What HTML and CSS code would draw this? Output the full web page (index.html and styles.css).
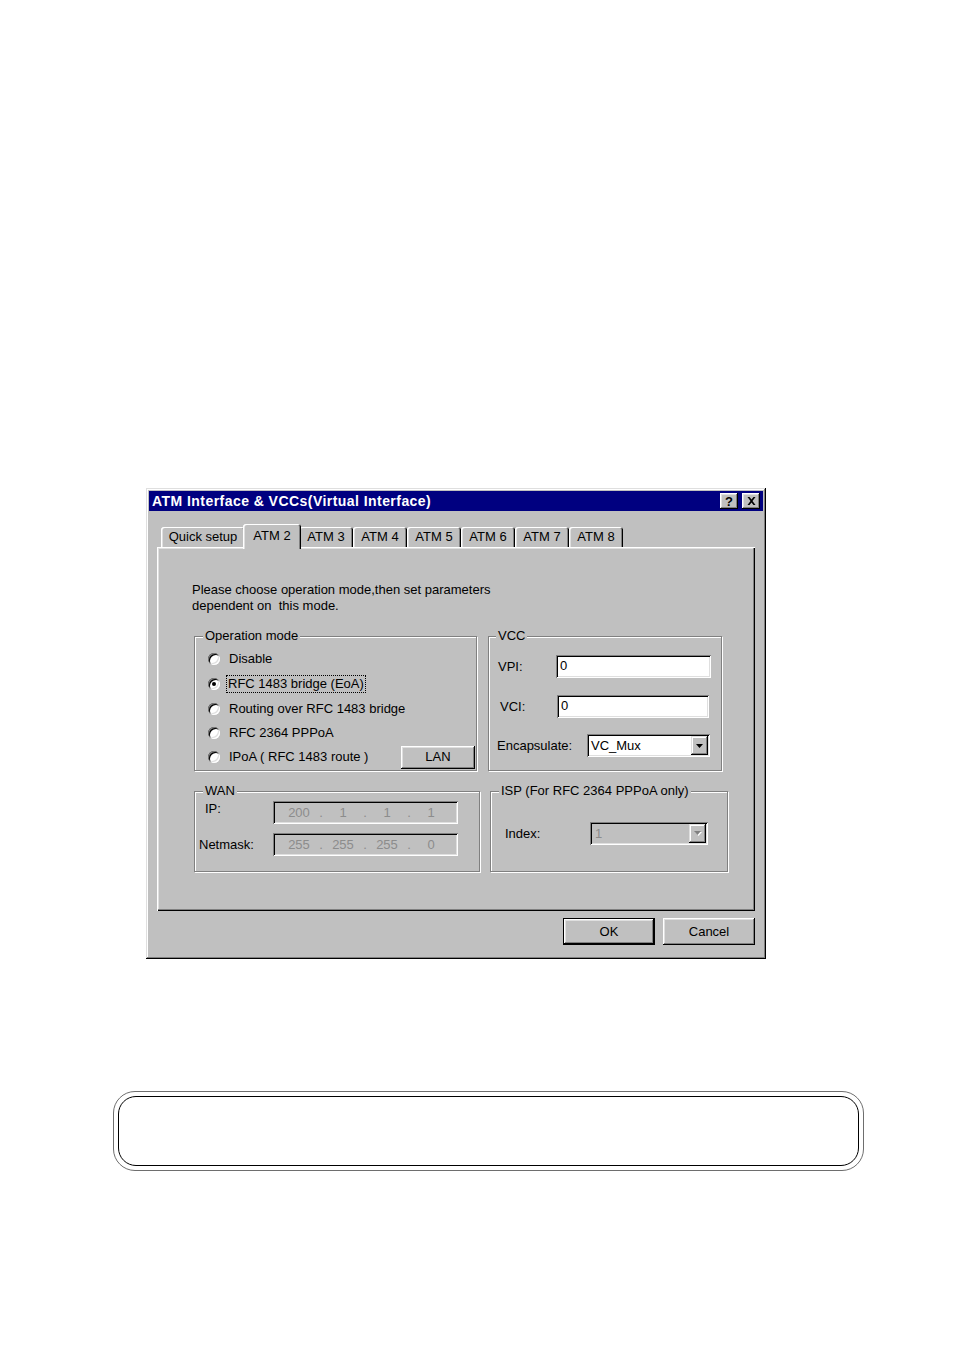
FILE: index.html
```html
<!DOCTYPE html>
<html>
<head>
<meta charset="utf-8">
<title>ATM Interface &amp; VCCs</title>
<link rel="stylesheet" href="styles.css">
</head>
<body>
<div class="page">
  <div class="window">
    <div class="titlebar">
      <span class="title">ATM Interface &amp; VCCs(Virtual Interface)</span>
      <div class="tbtns">
        <span class="tbtn help">?</span>
        <span class="tbtn close"><svg width="9" height="8" viewBox="0 0 9 8"><path d="M0.5 0h2l2 2.6 2-2.6h2l-3 4 3 4h-2l-2-2.6-2 2.6h-2l3-4z" fill="#000"/></svg></span>
      </div>
    </div>

    <div class="tabs">
      <div class="tab wide">Quick setup</div>
      <div class="tab active">ATM 2</div>
      <div class="tab">ATM 3</div>
      <div class="tab">ATM 4</div>
      <div class="tab">ATM 5</div>
      <div class="tab">ATM 6</div>
      <div class="tab">ATM 7</div>
      <div class="tab">ATM 8</div>
    </div>

    <div class="panel">
      <p class="intro">Please choose operation mode,then set parameters<br>dependent on&nbsp; this mode.</p>

      <div class="row row1">
        <fieldset class="group opmode">
          <legend>Operation mode</legend>
          <div class="radios">
            <div class="ropt r25"><span class="radio"></span><span class="rlabel">Disable</span></div>
            <div class="ropt r25"><span class="radio on"></span><span class="rlabel focus">RFC 1483 bridge (EoA)</span></div>
            <div class="ropt r25"><span class="radio"></span><span class="rlabel">Routing over RFC 1483 bridge</span></div>
            <div class="ropt r24"><span class="radio"></span><span class="rlabel">RFC 2364 PPPoA</span></div>
            <div class="ropt r24"><span class="radio"></span><span class="rlabel">IPoA ( RFC 1483 route )</span><span class="btn lan">LAN</span></div>
          </div>
        </fieldset>

        <fieldset class="group vcc">
          <legend>VCC</legend>
          <div class="frow vpi"><span class="flabel">VPI:</span><span class="edit">0</span></div>
          <div class="frow vci"><span class="flabel">VCI:</span><span class="edit">0</span></div>
          <div class="frow enc"><span class="flabel">Encapsulate:</span>
            <span class="combo"><span class="cval">VC_Mux</span><span class="cbtn"><svg width="7" height="4" viewBox="0 0 7 4"><path d="M0 0h7L3.5 4z" fill="#000"/></svg></span></span>
          </div>
        </fieldset>
      </div>

      <div class="row row2">
        <fieldset class="group wan">
          <legend>WAN</legend>
          <div class="frow iprow"><span class="flabel top">IP:</span>
            <span class="ipfield"><span class="oct">200</span><span class="dot">.</span><span class="oct">1</span><span class="dot">.</span><span class="oct">1</span><span class="dot">.</span><span class="oct">1</span></span>
          </div>
          <div class="frow maskrow"><span class="flabel">Netmask:</span>
            <span class="ipfield"><span class="oct">255</span><span class="dot">.</span><span class="oct">255</span><span class="dot">.</span><span class="oct">255</span><span class="dot">.</span><span class="oct">0</span></span>
          </div>
        </fieldset>

        <fieldset class="group isp">
          <legend>ISP (For RFC 2364 PPPoA only)</legend>
          <div class="frow idx"><span class="flabel">Index:</span>
            <span class="combo disabled"><span class="cval">1</span><span class="cbtn"><svg width="8" height="5" viewBox="0 0 8 5"><path d="M1 1h7L4.5 5z" fill="#fff"/><path d="M0 0h7L3.5 4z" fill="#808080"/></svg></span></span>
          </div>
        </fieldset>
      </div>
    </div>

    <div class="actions">
      <span class="btn default">OK</span>
      <span class="btn">Cancel</span>
    </div>
  </div>

  <div class="note"><div class="note-inner"></div></div>
</div>
</body>
</html>
```

FILE: styles.css
```css
* { box-sizing: border-box; }

html, body {
  margin: 0;
  padding: 0;
  background: #fff;
}

body {
  font-family: "Liberation Sans", Arial, sans-serif;
  font-size: 13px;
  line-height: 16px;
  color: #000;
}

.page {
  width: 954px;
  height: 1351px;
  padding-top: 488px;
}

/* ---------- window ---------- */
.window {
  margin-left: 146px;
  width: 620px;
  height: 471px;
  padding: 3px;
  background: #c0c0c0;
  box-shadow: inset -1px -1px #000, inset 1px 1px #dfdfdf,
              inset -2px -2px #808080, inset 2px 2px #fff;
}

.titlebar {
  height: 20px;
  background: #000080;
  display: flex;
  align-items: center;
  padding-left: 3px;
}

.title {
  color: #fff;
  font-weight: bold;
  font-size: 14px;
  letter-spacing: 0.45px;
  flex: 1;
  white-space: nowrap;
}

.tbtns {
  display: flex;
  gap: 4px;
  margin-right: 3px;
}

.tbtn {
  width: 18px;
  height: 16px;
  background: #c0c0c0;
  box-shadow: inset -1px -1px #000, inset 1px 1px #fff,
              inset -2px -2px #808080, inset 2px 2px #dfdfdf;
  display: flex;
  align-items: center;
  justify-content: center;
}

.tbtn.help {
  font-weight: bold;
  font-size: 13px;
  line-height: 13px;
}

/* ---------- tabs ---------- */
.tabs {
  display: flex;
  align-items: flex-end;
  height: 23px;
  margin: 13px 0 0 12px;
}

.tab {
  width: 54px;
  height: 20px;
  background: #c0c0c0;
  border-radius: 3px 3px 0 0;
  box-shadow: inset 1px 1px #fff, inset 2px 0 #dfdfdf,
              inset -1px 0 #000, inset -2px 0 #808080;
  display: flex;
  align-items: center;
  justify-content: center;
  white-space: nowrap;
}

.tab.wide { width: 84px; }

.tab.active {
  width: 58px;
  height: 25px;
  margin: 0 -2px -2px -2px;
  position: relative;
  z-index: 1;
  padding-bottom: 2px;
}

/* ---------- panel ---------- */
.panel {
  margin: 0 8px;
  height: 364px;
  padding: 35px 0 0 37px;
  background: #c0c0c0;
  box-shadow: inset 1px 1px #fff, inset -1px -1px #000,
              inset -2px -2px #808080, inset 2px 2px #dfdfdf;
}

.intro {
  margin: 0 0 14px -2px;
  white-space: nowrap;
}

.row {
  display: flex;
}

.row1 { gap: 11px; }
.row2 { gap: 10px; margin-top: 12px; }

.group {
  margin: 0;
  padding: 0;
  min-width: 0;
  border: 1px solid #808080;
  box-shadow: inset 1px 1px #fff, 1px 1px #fff;
}

.group legend {
  padding: 0 2px;
  margin-left: 8px;
  background: #c0c0c0;
  position: relative;
  line-height: 16px;
}

.row1 .group { height: 143px; }
.row2 .group { height: 89px; }

.opmode { width: 283px; }
.vcc { width: 234px; }
.vcc legend { margin-left: 7px; }
.wan { width: 286px; }
.isp { width: 238px; }

/* radios */
.radios {
  padding: 2px 1px 0 13px;
}

.ropt {
  display: flex;
  align-items: center;
}

.r25 { height: 25px; }
.r24 { height: 24px; }

.radio {
  width: 12px;
  height: 12px;
  border-radius: 50%;
  background: #fff;
  box-shadow: inset 1px 1px #808080, inset -1px -1px #fff,
              inset 2px 2px #000, inset -2px -2px #dfdfdf;
  display: flex;
  align-items: center;
  justify-content: center;
  flex: none;
}

.radio.on::after {
  content: "";
  width: 4px;
  height: 4px;
  border-radius: 50%;
  background: #000;
}

.rlabel {
  margin-left: 9px;
  white-space: nowrap;
}

.rlabel.focus {
  margin-left: 7px;
  padding: 0 1px;
  outline: 1px dotted #000;
}

/* buttons */
.btn {
  display: flex;
  align-items: center;
  justify-content: center;
  background: #c0c0c0;
  box-shadow: inset -1px -1px #000, inset 1px 1px #fff,
              inset -2px -2px #808080, inset 2px 2px #dfdfdf;
}

.btn.lan {
  margin-left: auto;
  width: 74px;
  height: 23px;
}

.actions {
  display: flex;
  justify-content: flex-end;
  gap: 8px;
  margin: 7px 8px 0 0;
}

.actions .btn {
  width: 92px;
  height: 27px;
}

.btn.default {
  box-shadow: inset 0 0 0 1px #000, inset -2px -2px #000, inset 2px 2px #fff,
              inset -3px -3px #808080, inset 3px 3px #dfdfdf;
}

/* field rows */
.frow {
  display: flex;
  align-items: center;
}

.flabel { white-space: nowrap; flex: none; }
.flabel.top { align-self: flex-start; }

.edit {
  height: 23px;
  background: #fff;
  padding: 2px 0 0 4px;
  line-height: 18px;
  box-shadow: inset 1px 1px #808080, inset -1px -1px #fff,
              inset 2px 2px #000, inset -2px -2px #dfdfdf;
}

.vpi { margin: 11px 0 0 9px; }
.vpi .flabel { width: 58px; }
.vpi .edit { width: 155px; }

.vci { margin: 17px 0 0 11px; }
.vci .flabel { width: 57px; }
.vci .edit { width: 152px; }

.enc { margin: 16px 0 0 8px; }
.enc .flabel { width: 90px; }

.combo {
  height: 23px;
  background: #fff;
  display: flex;
  align-items: center;
  padding: 2px;
  box-shadow: inset 1px 1px #808080, inset -1px -1px #fff,
              inset 2px 2px #000, inset -2px -2px #dfdfdf;
}

.enc .combo { width: 123px; }

.cval {
  flex: 1;
  padding-left: 2px;
}

.cbtn {
  width: 17px;
  height: 19px;
  background: #c0c0c0;
  display: flex;
  align-items: center;
  justify-content: center;
  box-shadow: inset -1px -1px #000, inset 1px 1px #dfdfdf,
              inset -2px -2px #808080, inset 2px 2px #fff;
}

.combo.disabled {
  background: #c0c0c0;
  color: #8c8c8c;
}

.combo.disabled .cval { padding-left: 3px; }

/* WAN */
.iprow { margin: 2px 0 0 4px; align-items: flex-start; }
.maskrow { margin: 9px 0 0 4px; }
.iprow .flabel { width: 74px; padding-left: 6px; }
.maskrow .flabel { width: 74px; }

.ipfield {
  width: 185px;
  height: 23px;
  display: flex;
  align-items: center;
  padding-left: 11px;
  color: #8c8c8c;
  background: #c0c0c0;
  box-shadow: inset 1px 1px #808080, inset -1px -1px #fff,
              inset 2px 2px #000, inset -2px -2px #dfdfdf;
}

.oct { width: 30px; text-align: center; }
.dot { width: 14px; text-align: center; }

/* ISP */
.idx { margin: 23px 0 0 14px; }
.idx .flabel { width: 85px; }
.idx .combo { width: 118px; }

/* ---------- note box ---------- */
.note {
  margin: 132px 0 0 113px;
  width: 751px;
  height: 80px;
  border: 1px solid #6e6e6e;
  border-radius: 22px;
  padding: 4px;
}

.note-inner {
  height: 100%;
  border: 1.5px solid #000;
  border-radius: 18px;
}
```
